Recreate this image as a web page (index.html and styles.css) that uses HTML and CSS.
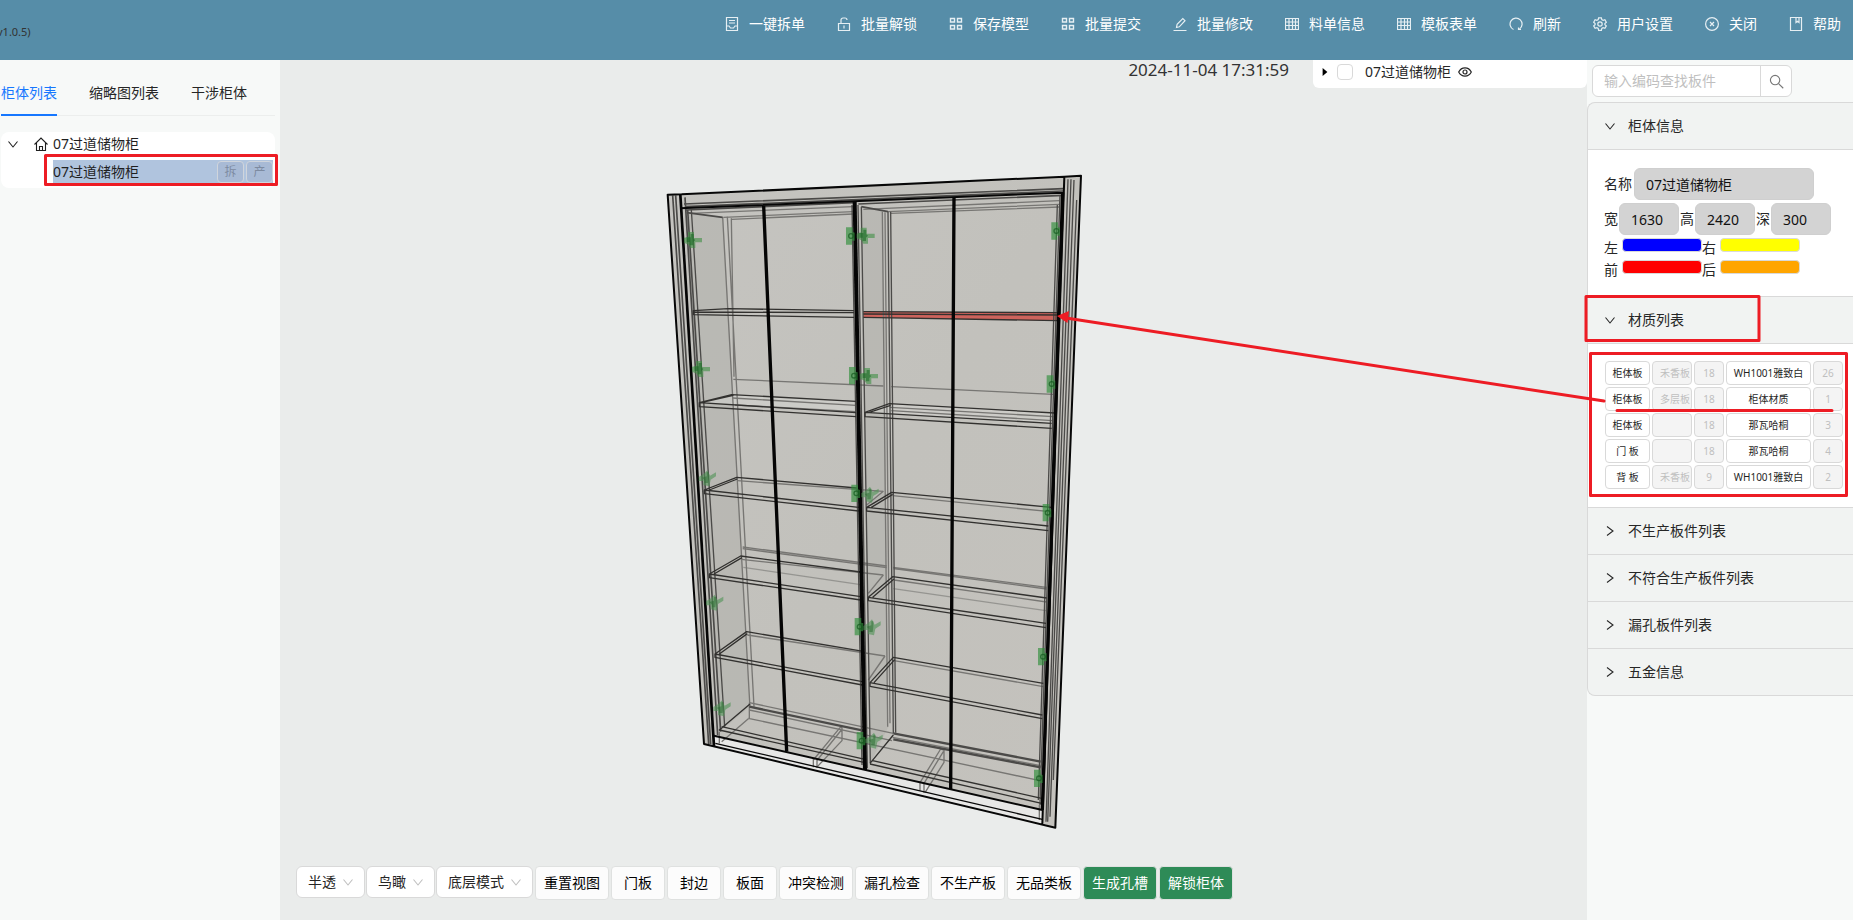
FILE: index.html
```html
<!DOCTYPE html>
<html lang="zh-CN">
<head>
<meta charset="utf-8">
<title>柜体拆单</title>
<link rel="stylesheet" href="styles.css">
</head>
<body>
<svg class="defs" aria-hidden="true">
  <symbol id="down" viewBox="0 0 10 10"><path d="M.5 2.500 5 8 9.500 2.500" fill="none" stroke="currentColor" stroke-width="1.1"/></symbol>
  <symbol id="right" viewBox="0 0 10 10"><path d="M2 .5 8 5 2 9.500" fill="none" stroke="currentColor" stroke-width="1.1"/></symbol>
  <symbol id="blocks" viewBox="0 0 14 14"><path d="M1.500 1.500h4v3.500h-4zM8.500 1.500h4v3.500h-4zM1.500 8.500h4v3.500h-4zM8.500 8.500h4v3.500h-4z" stroke-width="1.4"/></symbol>
  <symbol id="grid" viewBox="0 0 14 14"><path d="M.5 1.500h13v11H.5zM.5 5h13M.5 8.500h13M4 1.500v11M7.500 1.500v11M10.500 1.500v11"/></symbol>
</svg>
<div class="app">
  <header class="topbar">
    <span class="version">v1.0.5)</span>
    <nav class="menu">
      <button class="menu-item"><svg class="icon" viewBox="0 0 14 14"><path d="M1.500 8.500V.5h11v8M1.500 8.500v5h11v-5M4 3.500h6M4 6h6M1.500 9h2.500l1.500 2h3l1.500-2h2.500"/></svg>一键拆单</button>
      <button class="menu-item"><svg class="icon" viewBox="0 0 14 14"><path d="M1.500 6.500h11v7h-11zM4 6.500V3a2 2 0 0 1 2-2h2a2 2 0 0 1 2 2M7 8.500v3"/></svg>批量解锁</button>
      <button class="menu-item"><svg class="icon"><use href="#blocks"/></svg>保存模型</button>
      <button class="menu-item"><svg class="icon"><use href="#blocks"/></svg>批量提交</button>
      <button class="menu-item"><svg class="icon" viewBox="0 0 14 14"><path d="M.5 13.500h13M3.500 10.500l.6-3.200L9.800 1.500l2.200 2.200L6.300 9.800z"/></svg>批量修改</button>
      <button class="menu-item"><svg class="icon"><use href="#grid"/></svg>料单信息</button>
      <button class="menu-item"><svg class="icon"><use href="#grid"/></svg>模板表单</button>
      <button class="menu-item"><svg class="icon" viewBox="0 0 14 14"><path d="M4.500 12.500A6 6 0 1 1 10.500 12M9.500 10.500v2h2.500"/></svg>刷新</button>
      <button class="menu-item"><svg class="icon" viewBox="0 0 14 14"><path d="M5.600.8h2.800l.4 1.800 1.300.8 1.800-.6 1.400 2.500-1.400 1.200v1.200l1.400 1.200-1.400 2.400-1.800-.6-1.300.8-.4 1.800H5.600l-.4-1.800-1.300-.8-1.800.6L.7 8.900l1.400-1.200V6.500L.7 5.300l1.400-2.500 1.800.6 1.300-.8z"/><circle cx="7" cy="7" r="2.200"/></svg>用户设置</button>
      <button class="menu-item"><svg class="icon" viewBox="0 0 14 14"><circle cx="7" cy="7" r="6.400"/><path d="m5 5 4 4M9 5 5 9"/></svg>关闭</button>
      <button class="menu-item"><svg class="icon" viewBox="0 0 14 14"><path d="M1.500.5h11v13h-11zM7 .5v5l1.500-1.200L10 5.500v-5"/></svg>帮助</button>
    </nav>
  </header>

  <main class="workspace">
    <aside class="left">
      <div class="tabs" role="tablist">
        <button class="tab tab-active" role="tab" aria-selected="true">柜体列表</button>
        <button class="tab" role="tab">缩略图列表</button>
        <button class="tab" role="tab">干涉柜体</button>
      </div>
      <div class="tree">
        <div class="tree-row">
          <svg class="caret"><use href="#down"/></svg>
          <svg class="home" viewBox="0 0 14 14"><path d="M.5 7.500 7 1l6.500 6.500M2.500 6v7.500h9V6M5.500 13.500v-4h3v4" fill="none" stroke="currentColor" stroke-width="1.100"/></svg>
          <span>07过道储物柜</span>
        </div>
        <div class="tree-row tree-child">
          <span class="tree-name">07过道储物柜</span>
          <button class="mini" disabled>拆</button><button class="mini" disabled>产</button>
        </div>
      </div>
    </aside>

    <section class="stage">
      <svg class="model" viewBox="280 60 1307 860" aria-label="柜体模型">
        <defs>
          <linearGradient id="wood" x1="0" y1="0" x2="1" y2="1"><stop offset="0" stop-color="#c5c4c0"/><stop offset=".5" stop-color="#c2c1bc"/><stop offset="1" stop-color="#c4c2bd"/></linearGradient>
          <g id="hinge"><path d="M-8-24H10V-6H34V7H14V24H0L-6 14-20 8V-6L-8-10z" fill="#3f8f45" opacity=".6"/><path d="M-12-8H0V-18H9V-4L14 0 8 6V16H-2V6H-12z" fill="#1c6b26" opacity=".6"/></g>
          <g id="hinge-up"><path d="M-6-14 4-24 12-8 30-18V-6L14 4 10 24-8 20-8 8-22 8V-4z" fill="#4f9355" opacity=".6"/><path d="M-12-2 2-6V-18H8V-2L6 14H-4V6z" fill="#2a6b30" opacity=".5"/></g>
          <g id="plate"><path d="M-12-26H8V-12L14-10V14H6V26H-12z" fill="#2f8f3a" opacity=".65"/><circle cx="3" r="7" fill="none" stroke="#145a1e" stroke-width="4" opacity=".7"/></g>
        </defs>
        <g transform="translate(650 160) scale(.33333)" fill="none" stroke-linejoin="round">
          <path d="M192 1727 1177 1950V1990L192 1758z" fill="#e7e7e6"/>
          <path d="M53 104 1293 47 1216 2003 1177 1990V1950L192 1725V1760L162 1752z" fill="url(#wood)"/>
          <path d="M108 155 220 172 300 1640 208 1715zM634 140 700 155 715 1700 661 1810z" fill="#aaa9a5" opacity=".4"/>
          <path d="M148 728 245 704 618 724V758zM645 757 718 731 1215 759 1205 790z" fill="#d6d5d2" opacity=".5"/>
          <path d="M640 455 1222 458V482L640 472z" fill="#cd635c"/>
          <g stroke="#777673" stroke-width="4">
            <path d="M218 172 300 1645M232 170 312 1640M244 175 252 650M697 155 713 1700M705 157 720 1690"/>
            <path d="M220 172 610 155M245 178 610 162M714 155 1228 133M722 160 1228 141M640 148 1228 122M120 160 610 140"/>
            <path d="M250 658 700 678M724 680 1210 703M262 962 700 994M728 1007 1200 1055M278 1161 710 1218M278 1166 710 1223M730 1222 1190 1282M730 1226 1190 1287"/>
            <path d="M274 1198 700 1245M292 1425 705 1488M732 1260 1190 1326M732 1502 1180 1580"/>
            <path d="M280 1222 632 1274M730 1286 1188 1352" opacity=".6"/>
            <path d="M248 714 618 736M255 735 618 755M720 742 1210 770M724 752 1208 782M700 994 650 1035M700 1245 655 1300M705 1488 655 1560"/>
            <path d="M298 1628 730 1720M298 1650 726 1742M295 1675 1170 1862M728 1732 1172 1817M298 1628V1676M295 1676 215 1745M208 1715V1750"/>
            <path d="M1168 1935V1980M490 1800 570 1703H576V1742L502 1820M502 1800 574 1710M490 1796V1822M501 1798V1824M810 1868 872 1767 882 1770V1807L825 1898M822 1870 880 1775M810 1864V1892M822 1866V1898"/>
          </g>
          <g stroke="#4b4a48" stroke-width="5">
            <path d="M68 106 176 1752M77 106 182 1752M105 112 203 1725M113 150 212 1715M102 132 1240 86M105 140 1240 93"/>
            <path d="M606 135 636 1815M624 135 652 1825M634 140 661 1810M714 155 730 1720M722 155 737 1718" stroke-width="4"/>
            <path d="M124 150 224 1700M1230 105 1170 1935M1222 135 1165 1920M1254 58 1188 1985M1263 58 1193 1985M1272 60 1200 1970M1280 120 1210 1860" stroke-width="4"/>
            <path d="M110 158 218 172M634 140 714 155M108 150 610 128M625 132 1240 106"/>
            <path d="M298 1640 640 1712M730 1720 1172 1805M730 1738 1172 1822" stroke-width="7"/>
          </g>
          <g stroke="#32312f" stroke-width="4">
            <path d="M130 464V452L235 446 612 452M130 456 612 458M130 464 612 472"/>
            <path d="M618 758 148 728 245 704 618 724M148 728V740L618 770M160 726 250 706"/>
            <path d="M626 1042 163 990 260 952 620 984M163 990V1001L626 1053M178 990 262 957"/>
            <path d="M632 1310 178 1242 272 1188 632 1236M178 1242V1253L632 1320M192 1242 276 1193"/>
            <path d="M637 1565 195 1482 290 1415 640 1474M195 1482V1492L637 1575M208 1482 292 1421"/>
            <path d="M300 1632 208 1710 645 1808M215 1700 645 1798"/>
            <path d="M640 455 1222 458M640 462 1222 465M640 472 1222 482"/>
            <path d="M1205 790 645 757 718 731 1215 759M645 757V770L1205 805M658 757 722 736"/>
            <path d="M1195 1098 650 1042 725 997 1205 1042M650 1042V1053L1195 1112M664 1042 728 1003"/>
            <path d="M1188 1390 655 1312 728 1250 1190 1314M655 1312V1322L1188 1403M668 1312 732 1257"/>
            <path d="M1177 1665 660 1568 730 1492 1180 1570M660 1568V1579L1177 1676M672 1568 734 1499"/>
            <path d="M730 1725 660 1810M668 1802 1175 1915M660 1812 1175 1930"/>
          </g>
          <g stroke="#070707" stroke-width="6">
            <path d="M53 104 95 103 1243 50 1293 47 1216 2003 162 1752zM90 145 1240 98M192 1727 1177 1950M1243 50 1177 1992"/>
            <path d="M196 1750 1177 1978" stroke-width="4"/>
          </g>
          <g stroke="#050505">
            <path d="M91 104 192 1760" stroke-width="8"/>
            <path d="M341 138 410 1775M912 113 902 1888M1238 98 1177 1950" stroke-width="10"/>
            <path d="M614 125 645 1830" stroke-width="12"/>
          </g>
          <use href="#hinge" x="122" y="240"/><use href="#hinge" x="146" y="627"/><use href="#hinge-up" x="168" y="955"/><use href="#hinge-up" x="190" y="1328"/><use href="#hinge-up" x="212" y="1645"/>
          <use href="#hinge" x="640" y="227"/><use href="#hinge" x="650" y="648"/><use href="#hinge-up" x="656" y="1004"/><use href="#hinge-up" x="662" y="1402"/><use href="#hinge-up" x="668" y="1742"/>
          <use href="#plate" x="600" y="228"/><use href="#plate" x="609" y="647"/><use href="#plate" x="616" y="1000"/><use href="#plate" x="626" y="1400"/><use href="#plate" x="632" y="1742"/>
          <use href="#plate" x="1216" y="213"/><use href="#plate" x="1202" y="672"/><use href="#plate" x="1190" y="1058"/><use href="#plate" x="1176" y="1490"/><use href="#plate" x="1164" y="1855"/>
        </g>
      </svg>
      <div class="stage-top">
        <time class="clock">2024-11-04 17:31:59</time>
        <div class="layer">
          <svg class="play" viewBox="0 0 6 10"><path d="M0 0 6 5 0 10z"/></svg>
          <input class="check" type="checkbox" id="layer">
          <label for="layer">07过道储物柜</label>
          <svg class="eye" viewBox="0 0 14 14"><path d="M.7 7C3.500 1.500 10.500 1.500 13.300 7 10.500 12.500 3.500 12.500.7 7z"/><circle cx="7" cy="7" r="2"/></svg>
        </div>
      </div>
      <div class="toolbar">
        <div class="picks">
          <span class="pick"><select aria-label="显示"><option>半透</option></select><svg><use href="#down"/></svg></span>
          <span class="pick"><select aria-label="视角"><option>鸟瞰</option></select><svg><use href="#down"/></svg></span>
          <span class="pick pick-wide"><select aria-label="模式"><option>底层模式</option></select><svg><use href="#down"/></svg></span>
        </div>
        <button class="btn">重置视图</button>
        <button class="btn btn-short">门板</button>
        <button class="btn btn-short">封边</button>
        <button class="btn btn-short">板面</button>
        <button class="btn">冲突检测</button>
        <button class="btn">漏孔检查</button>
        <button class="btn">不生产板</button>
        <button class="btn">无品类板</button>
        <button class="btn btn-green">生成孔槽</button>
        <button class="btn btn-green">解锁柜体</button>
      </div>
    </section>

    <aside class="side">
      <form class="search">
        <input type="text" aria-label="查找板件" placeholder="输入编码查找板件">
        <button type="button" aria-label="搜索"><svg viewBox="0 0 16 16"><circle cx="6.500" cy="6.500" r="5"/><path d="m10.200 10.200 5 5"/></svg></button>
      </form>
      <div class="collapse">
        <button class="fold"><svg><use href="#down"/></svg>柜体信息</button>
        <div class="panel info">
          <div class="field-row"><label for="name">名称</label><input class="field field-name" id="name" value="07过道储物柜"></div>
          <div class="field-row">
            <label for="w">宽</label><input class="field" id="w" value="1630">
            <label for="h">高</label><input class="field" id="h" value="2420">
            <label for="d">深</label><input class="field" id="d" value="300">
          </div>
          <div class="color-row"><span>左</span><i class="swatch blue"></i><span>右</span><i class="swatch yellow"></i></div>
          <div class="color-row"><span>前</span><i class="swatch red"></i><span>后</span><i class="swatch orange"></i></div>
        </div>
        <button class="fold"><svg><use href="#down"/></svg>材质列表</button>
        <div class="panel materials">
          <button class="cell">柜体板</button><input class="cell cut" aria-label="基材" value="禾香板" disabled><button class="cell" disabled>18</button><button class="cell">WH1001雅致白</button><button class="cell" disabled>26</button>
          <button class="cell">柜体板</button><input class="cell cut" aria-label="基材" value="多层板" disabled><button class="cell" disabled>18</button><button class="cell">柜体材质</button><button class="cell" disabled>1</button>
          <button class="cell">柜体板</button><input class="cell cut" aria-label="基材" value="" disabled><button class="cell" disabled>18</button><button class="cell">那瓦哈桐</button><button class="cell" disabled>3</button>
          <button class="cell">门 板</button><input class="cell cut" aria-label="基材" value="" disabled><button class="cell" disabled>18</button><button class="cell">那瓦哈桐</button><button class="cell" disabled>4</button>
          <button class="cell">背 板</button><input class="cell cut" aria-label="基材" value="禾香板" disabled><button class="cell" disabled>9</button><button class="cell">WH1001雅致白</button><button class="cell" disabled>2</button>
        </div>
        <button class="fold"><svg><use href="#right"/></svg>不生产板件列表</button>
        <button class="fold"><svg><use href="#right"/></svg>不符合生产板件列表</button>
        <button class="fold"><svg><use href="#right"/></svg>漏孔板件列表</button>
        <button class="fold"><svg><use href="#right"/></svg>五金信息</button>
      </div>
    </aside>
  </main>

  <svg class="marks" viewBox="0 0 1853 920" aria-hidden="true">
    <g fill="none" stroke="#ed1c24" stroke-width="3" stroke-linejoin="round" stroke-linecap="round">
      <rect x="45.500" y="155.500" width="231" height="29"/>
      <rect x="1586" y="296.500" width="173" height="44"/>
      <rect x="1590.500" y="353.500" width="256" height="142"/>
      <path d="M1617 410.500H1832M1604 401 1066 318"/>
    </g>
    <path d="M1057 316 1069 311 1067.500 323z" fill="#ed1c24"/>
  </svg>
</div>
</body>
</html>
```
FILE: styles.css
```css
* { box-sizing: border-box; }
body {
  margin: 0;
  font: 14px/22px "Noto Sans", "Noto Sans CJK SC", sans-serif;
  color: #262626;
}
button, input, select { font: inherit; color: inherit; margin: 0; }
button { padding: 0; border: 0; background: none; white-space: nowrap; }
.defs { position: absolute; width: 0; height: 0; }
.app { position: relative; min-height: 100vh; display: flex; flex-direction: column; overflow: hidden; }

.topbar {
  display: flex;
  justify-content: space-between;
  height: 60px;
  padding-right: 12px;
  background: #568da8;
}
.version { margin-left: -3px; font-size: 11px; line-height: 64px; color: #333; }
.menu { display: flex; align-items: flex-start; gap: 32px; padding-top: 13px; color: #fff; }
.menu-item { display: flex; align-items: center; gap: 10px; }
.icon { width: 14px; height: 14px; fill: none; stroke: #e6eff3; stroke-width: 1.2; }

.workspace { flex: 1; display: flex; background: #f7f9f8; }
.left { width: 280px; padding: 10px 5px 0 1px; }
.tabs { display: flex; gap: 32px; height: 46px; margin-bottom: 16px; border-bottom: 1px solid #eceeed; }
.tab { height: 46px; padding-top: 2px; border-bottom: 2px solid transparent; }
.tab-active { color: #1677ff; border-bottom-color: #1677ff; }
.tree { background: #fff; border-radius: 8px; color: #1f1f1f; }
.tree-row { display: flex; align-items: center; height: 28px; padding: 0 2px 4px 7px; }
.caret { width: 10px; height: 10px; margin-right: 16px; }
.home { width: 14px; height: 14px; margin-right: 5px; }
.tree-child { padding-left: 52px; gap: 2px; background: linear-gradient(#b0c4de, #b0c4de) 52px 0 / 220px 23px no-repeat; }
.tree-name { flex: 1; }
.mini { width: 27px; height: 22px; border: 1px solid #d0d5dc; border-radius: 4px; background: #a8bad5; color: #7d8ba1; font-size: 12px; line-height: 20px; }

.stage { position: relative; flex: 1; display: flex; flex-direction: column; justify-content: space-between; background: #eaeceb; }
.model { position: absolute; inset: 0; width: 100%; height: 100%; }
.stage-top { position: relative; display: flex; justify-content: flex-end; gap: 24px; }
.clock { font-size: 17px; line-height: 20px; color: #333; }
.layer { display: flex; align-items: center; width: 274px; height: 28px; padding: 0 8px 4px 9px; background: #fff; border-radius: 0 0 6px 6px; }
.play { width: 6px; height: 8px; margin-right: 9px; }
.check { appearance: none; width: 16px; height: 16px; margin-right: 12px; border: 1px solid #d9d9d9; border-radius: 4px; background: #fff; }
.eye { width: 14px; height: 14px; margin-left: 7px; fill: none; stroke: #262626; stroke-width: 1.2; }

.toolbar { position: relative; display: flex; align-items: flex-start; gap: 2px; padding: 0 16px 20px; }
.picks { display: flex; gap: 1px; }
.pick { display: grid; width: 69px; height: 32px; align-items: center; }
.pick-wide { width: 97px; }
.pick > * { grid-area: 1 / 1; }
.pick select { appearance: none; width: 100%; height: 32px; padding: 0 11px; border: 1px solid #d9d9d9; border-radius: 6px; background: #fff; }
.pick svg { width: 10px; height: 10px; justify-self: end; margin-right: 12px; color: #bfbfbf; pointer-events: none; }
.btn { width: 74px; height: 34px; border: 1px solid #dfe1e0; border-radius: 4px; background: #fcfcfc; color: #000; }
.btn-short { width: 54px; }
.btn-green { background: #2e8b57; color: #fff; }

.side { width: 266px; padding-top: 5px; overflow: hidden; }
.search { display: flex; width: 200px; height: 32px; margin: 0 0 5px 5px; border: 1px solid #d9d9d9; border-radius: 6px; background: #fff; }
.search input { flex: 1; min-width: 0; padding: 0 11px; border: 0; border-right: 1px solid #d9d9d9; background: none; }
.search input::placeholder { color: #bfbfbf; }
.search button { width: 30px; display: grid; place-items: center; }
.search svg { width: 15px; height: 15px; fill: none; stroke: #777; stroke-width: 1.2; }

.collapse { border: 1px solid #d9d9d9; border-right: 0; border-radius: 8px 0 0 8px; background: #f1f3f2; }
.fold { display: flex; align-items: center; gap: 13px; width: 100%; height: 47px; padding-left: 17px; border-bottom: 1px solid #d9d9d9; }
.fold:last-child { border-bottom: 0; height: 46px; }
.fold svg { width: 10px; height: 10px; }
.panel { background: #fff; border-bottom: 1px solid #d9d9d9; }
.info { height: 147px; padding: 18px 0 0 16px; }
.field-row { display: flex; align-items: center; gap: 1px; margin-bottom: 3px; }
.field-row label { flex: none; }
.field { width: 60px; height: 32px; padding: 0 11px; border: 1px solid #cfcfcf; border-radius: 6px; background: #d3d3d3; color: #111; }
.field-name { width: 180px; margin-left: 1px; }
.color-row { display: flex; align-items: flex-start; height: 22px; line-height: 20px; }
.color-row span { width: 18px; }
.swatch { width: 80px; height: 14px; border: 1px solid #d9d9d9; border-radius: 4px; }
.blue { background: #00f; }
.yellow { background: #ff0; }
.red { background: #f00; }
.orange { background: #ffa500; }

.materials { display: grid; grid-template-columns: 45px 40px 30px 85px 30px; gap: 2px; padding: 17px 0 18px 17px; }
.cell { min-width: 0; height: 24px; padding: 0; border: 1px solid #d9d9d9; border-radius: 4px; background: #fff; font-size: 10px; line-height: 20px; color: #1f1f1f; text-align: center; }
.cell:disabled { background: #f4f4f4; color: #bfbfbf; }
.cut { padding: 0 0 2px 7px; text-align: left; }

.marks { position: absolute; inset: 0; width: 100%; height: 100%; pointer-events: none; }
```
